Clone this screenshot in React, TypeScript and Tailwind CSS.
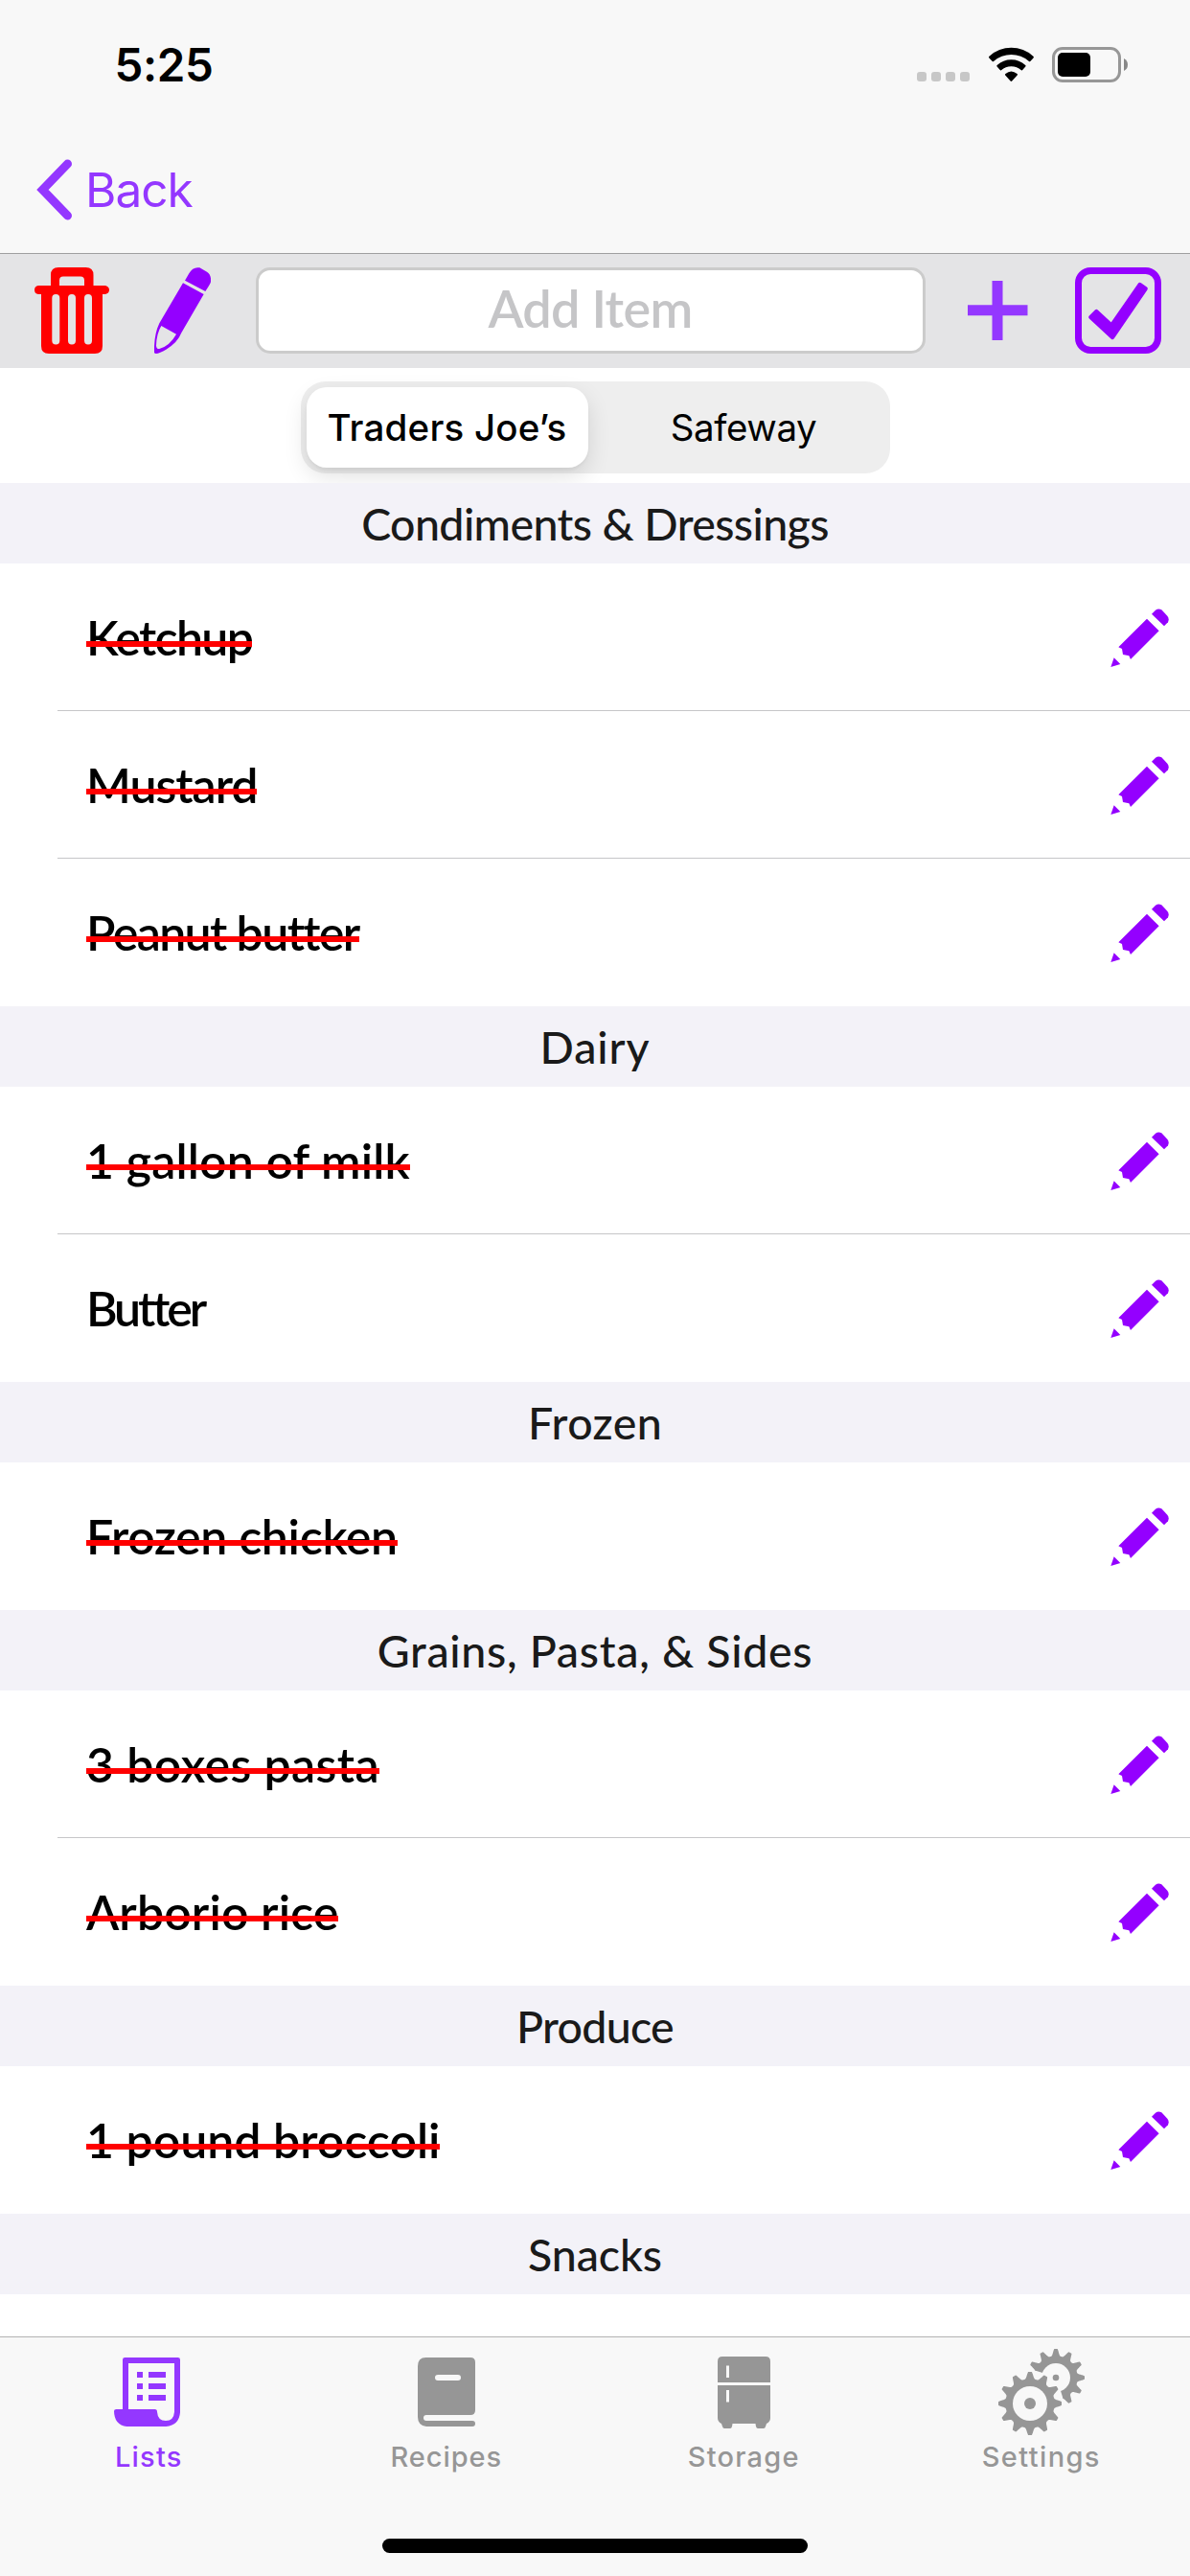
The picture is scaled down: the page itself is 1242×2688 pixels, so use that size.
import React from 'react';

type Item = { name: string; spacing: string; done: boolean };
type Section = { title: string; spacing: string; items: Item[] };

const sections: Section[] = [
  {
    title: 'Condiments & Dressings',
    spacing: 'tracking-[-0.6px]',
    items: [
      { name: 'Ketchup', spacing: 'tracking-[-1.6px]', done: true },
      { name: 'Mustard', spacing: 'tracking-[-1px]', done: true },
      { name: 'Peanut butter', spacing: 'tracking-[-1.6px]', done: true },
    ],
  },
  {
    title: 'Dairy',
    spacing: 'tracking-[0.9px]',
    items: [
      { name: '1 gallon of milk', spacing: 'tracking-[0.15px]', done: true },
      { name: 'Butter', spacing: 'tracking-[-3.1px]', done: false },
    ],
  },
  {
    title: 'Frozen',
    spacing: 'tracking-[0.4px]',
    items: [{ name: 'Frozen chicken', spacing: 'tracking-[-0.3px]', done: true }],
  },
  {
    title: 'Grains, Pasta, & Sides',
    spacing: 'tracking-[0.7px]',
    items: [
      { name: '3 boxes pasta', spacing: 'tracking-[0.4px]', done: true },
      { name: 'Arborio rice', spacing: 'tracking-[0.1px]', done: true },
    ],
  },
  {
    title: 'Produce',
    spacing: 'tracking-[-0.7px]',
    items: [{ name: '1 pound broccoli', spacing: 'tracking-[0px]', done: true }],
  },
  { title: 'Snacks', spacing: 'tracking-[-0.1px]', items: [] },
];

function StatusBar() {
  return (
    <div className="flex h-[132px] items-start justify-between pl-[119.5px] pr-[65px]">
      <span className="mt-[38px] text-[47.5px] font-semibold leading-[60px] tracking-[-0.4px] text-black">5:25</span>
      <div className="mt-[49px] flex items-start">
        <div className="mr-[64px] mt-[26px] flex gap-[5px]">
          {[0, 1, 2, 3].map((i) => (
            <span key={i} className="size-[10px] rounded-[3px] bg-[#c7c7c7]" />
          ))}
        </div>
        <svg className="-ml-[45px] mr-[18px] h-[37px] w-[49px]" viewBox="1031 49 49 37">
          <path d="M1032.4 60.4q-.9-.9.1-1.7A34 34 0 0 1 1078.400 58.700q1 .8.1 1.700L1075.300 64q-.6.6-1.300 0A28 28 0 0 0 1037 64q-.7.6-1.300 0Z" />
          <path d="M1040.600 69.600q-.8-.8.1-1.600A22 22 0 0 1 1070.200 68q.9.8.1 1.600L1067.200 73.100q-.6.6-1.300.1A16 16 0 0 0 1045 73.200q-.7.5-1.300-.1Z" />
          <path d="M1049.200 78.400q-.7-.8.2-1.400Q1055.400 72 1061.600 77q.8.600.1 1.400L1056.200 84.500q-.8.800-1.600 0Z" />
        </svg>
        <svg className="h-[37px] w-[79px]" viewBox="0 0 79 37">
          <rect x="1.500" y="1.500" width="69" height="34" rx="9.500" fill="none" stroke="#979797" strokeWidth="3" />
          <rect x="6" y="6" width="34" height="25" rx="5" />
          <path d="M75 12q4 2 4 6.500t-4 6.500Z" fill="#888" />
        </svg>
      </div>
    </div>
  );
}

function NavBar() {
  return (
    <div className="flex h-[132px] items-center pl-[38px]">
      <svg className="h-[64px] w-[38px]" viewBox="38 166.500 38 64">
        <path d="M70.500 171.500 44.500 198.500 70.500 225.500" fill="none" stroke="#9437ff" strokeWidth="9" strokeLinecap="round" />
      </svg>
      <span className="ml-[13px] text-[49.5px] leading-[60px] tracking-[-1px] text-[#9437ff]">Back</span>
    </div>
  );
}

function TrashIcon() {
  return (
    <svg className="h-[90px] w-[78px]" viewBox="0 0 78 90">
      <path
        fill="#ff0000"
        fillRule="evenodd"
        d="M17 19V8q0-8 8-8H53.500q8 0 8 8V19H74q4 1 4 4.500T74 28H71V82q0 8-8 8H15q-8 0-8-8V28H4q-4-.5-4-4.500T4 19ZM26 19H52V13.500q0-4-4-4H30q-4 0-4 4ZM18.300 32V76.500a4 4 0 0 0 8 0V32a4 4 0 0 0-8 0ZM35 32V76.500a4 4 0 0 0 8 0V32a4 4 0 0 0-8 0ZM52 32V76.500a4 4 0 0 0 8 0V32a4 4 0 0 0-8 0Z"
      />
    </svg>
  );
}

function FountainPencilIcon() {
  return (
    <svg className="h-[90px] w-[59px]" viewBox="483 837 177 270">
      <g fill="#9400ff">
        <path d="M579 878 592 856Q604 834 625 838L648 851Q662 860 660 882 659 888 643 912Z" />
        <path
          fillRule="evenodd"
          d="M573 886 638 921 568 1042Q556 1073 520 1094 500 1106 488 1107L483 1105Q481 1050 499 1012ZM505 1020Q490 1045 489 1082 490 1093 499 1092 532 1082 552 1046Z"
        />
      </g>
    </svg>
  );
}

function PlusIcon() {
  return (
    <svg className="h-[62px] w-[62.5px]" viewBox="0 0 62.500 62">
      <path d="M25.500 0h11v25.200h26v11h-26V62h-11V36.200H0v-11h25.500Z" fill="#9437ff" />
    </svg>
  );
}

function CheckBoxIcon() {
  return (
    <svg className="size-[90px]" viewBox="666 837 270 270">
      <rect x="676.500" y="847.500" width="249" height="249" rx="38" fill="none" stroke="#9400ff" strokeWidth="21" />
      <path d="M715 993 733 975 780 1019 869 891 887 904 783 1056Z" fill="#9400ff" stroke="#9400ff" strokeWidth="13" strokeLinejoin="round" />
    </svg>
  );
}

function Toolbar() {
  return (
    <div className="flex h-[120px] items-start border-t border-[#9f9fa0] bg-[#e4e4e6] pl-9 pt-[14px]">
      <TrashIcon />
      <div className="ml-[47px]">
        <FountainPencilIcon />
      </div>
      <input
        readOnly
        placeholder="Add Item"
        className="ml-[47px] h-[90px] w-[699px] rounded-[15px] border-[3px] border-[#cbcbcb] bg-white pb-[6px] pr-[1px] text-center font-[Lato] text-[54px] font-semibold tracking-[-0.7px] outline-none placeholder:text-[#c5c5c7]"
      />
      <div className="ml-[44px] mt-[14px]">
        <PlusIcon />
      </div>
      <div className="ml-[49.5px]">
        <CheckBoxIcon />
      </div>
    </div>
  );
}

function StoreTabs() {
  return (
    <div className="flex h-[120px] justify-center pt-[14px]">
      <div className="flex h-24 w-[615px] items-center rounded-[26px] bg-[#eeeeee] pl-[6px] text-[38.5px] text-black">
        <div className="flex h-[84px] w-[294px] items-center justify-center rounded-[21px] bg-white pt-[2px] font-medium tracking-[0.2px] shadow-[0_9px_24px_rgba(0,0,0,0.12),0_3px_3px_rgba(0,0,0,0.04)]">
          Traders Joe’s
        </div>
        <div className="flex flex-1 justify-center pl-[10px] pt-[2px] tracking-[-0.4px]">Safeway</div>
      </div>
    </div>
  );
}

function RowPencil() {
  return (
    <svg className="h-[62px] w-[62px]" viewBox="117 164 186 186">
      <g fill="#9400ff">
        <path d="M246 181 258 169Q267 162 277 168L295 187Q302 195 297 207L285 219Z" />
        <path d="M231 196 269 234 180 323 175 312 156 308 153 290 142 285Z" />
        <path d="M128 318 148 338 118 347Z" />
      </g>
    </svg>
  );
}

function ListRow({ item, last }: { item: Item; last: boolean }) {
  return (
    <div className="flex h-[154px] bg-white pl-[60px]">
      <div className={last ? 'flex flex-1 justify-between pl-[30px]' : 'flex flex-1 justify-between border-b border-[#c6c6c8] pl-[30px]'}>
        <div className="relative h-[154px]">
          <span className={`font-[Lato] text-[50px] font-semibold leading-[154px] text-black whitespace-nowrap ${item.spacing}`}>{item.name}</span>
          {item.done && <span className="absolute left-0 top-[81px] h-[6px] w-full bg-[#ff0000]" />}
        </div>
        <div className="mr-[21px] mt-[46.500px]">
          <RowPencil />
        </div>
      </div>
    </div>
  );
}

function ListsIcon() {
  return (
    <svg className="-ml-[3px] h-[72px] w-[69px]" viewBox="57 90 207 216">
      <g fill="#9437ff">
        <path
          fillRule="evenodd"
          d="M91 90H257Q264 90 264 97V262Q261 302 220 306H97Q58 302 57 258 57 252 64 252H84V97Q84 90 91 90ZM102 108V252H185Q192 252 192 260 194 288 219 288 244 288 246 260V108Z"
        />
        <path d="M129 135h18v18h-18ZM165 135h54v18h-54ZM129 171h18v18h-18ZM165 171h54v18h-54ZM129 207h18v18h-18ZM165 207h54v18h-54Z" />
      </g>
    </svg>
  );
}

function RecipesIcon() {
  return (
    <svg className="h-[72px] w-[60px]" viewBox="0 0 60 72">
      <path
        fill="#969696"
        fillRule="evenodd"
        d="M8.500 0H55Q60 0 60 5V55Q60 60 55 60H9Q6 60 6 63T9 66H57Q60 66 60 69T57 72H9Q0 71 0 62V9Q0 0 8.500 0ZM21 18a3 3 0 0 0 0 6H42a3 3 0 0 0 0-6Z"
      />
    </svg>
  );
}

function StorageIcon() {
  return (
    <svg className="h-[75px] w-[55px]" viewBox="0 0 55 75">
      <path
        fill="#969696"
        fillRule="evenodd"
        d="M5 0H50Q55 0 55 5V27H0V5Q0 0 5 0ZM0 30H55V64Q55 68 51 70L50 73Q49.500 75 48 75H42Q40.500 75 40 73L39.500 70H15.500L15 73Q14.500 75 13 75H7Q5.500 75 5 73L4 70Q0 68 0 64ZM9 9.500V22H12V9.500ZM9 35V47.500H12V35Z"
      />
    </svg>
  );
}

/* Twelve-toothed wheel outline sampled in polar coordinates. */
function gearPath(cx: number, cy: number, root: number, tip: number) {
  const points: string[] = [];
  for (let i = 0; i < 720; i++) {
    const a = (i * Math.PI) / 360;
    const tooth = Math.min(1, Math.pow((1 + Math.cos(12 * a)) / 2, 1.8) * 1.25);
    const r = root + (tip - root) * tooth;
    points.push(`${(cx + r * Math.cos(a)).toFixed(2)} ${(cy + r * Math.sin(a)).toFixed(2)}`);
  }
  return `M${points.join('L')}Z`;
}

function SettingsIcon() {
  return (
    <svg className="h-[90px] w-[90px]" viewBox="66 63 270 270">
      <path d={gearPath(246, 153, 68, 90)} fill="#969696" />
      <circle cx="246" cy="153" r="45" fill="#f8f8f8" />
      <circle cx="165" cy="234" r="104" fill="#f8f8f8" />
      <circle cx="246" cy="153" r="10" fill="#969696" />
      <path d={gearPath(165, 234, 77, 99)} fill="#969696" />
      <circle cx="165" cy="234" r="54" fill="#f8f8f8" />
      <circle cx="165" cy="234" r="18" fill="#969696" />
    </svg>
  );
}

const tabs = [
  { label: 'Lists', icon: <ListsIcon />, style: 'text-[#9437ff] tracking-[1.2px]' },
  { label: 'Recipes', icon: <RecipesIcon />, style: 'text-[#969696] tracking-[0.9px]' },
  { label: 'Storage', icon: <StorageIcon />, style: 'text-[#969696] tracking-[1.2px]' },
  { label: 'Settings', icon: <SettingsIcon />, style: 'text-[#969696] tracking-[1.4px]' },
];

function TabBar() {
  return (
    <div className="flex h-[250px] flex-col items-center border-t border-[#b2b2b2] bg-[#f8f8f8]">
      <div className="grid w-full grid-cols-4 pt-[7px]">
        {tabs.map((tab) => (
          <div key={tab.label} className="flex flex-col items-center">
            <div className="flex h-[100px] items-center">{tab.icon}</div>
            <span className={`text-[29px] font-medium leading-[35px] ${tab.style}`}>{tab.label}</span>
          </div>
        ))}
      </div>
      <div className="mt-[68px] h-[15px] w-[444px] rounded-full bg-black" />
    </div>
  );
}

export default function App() {
  return (
    <div className="flex h-[2688px] w-[1242px] flex-col overflow-hidden bg-white font-[Inter]">
      <header className="bg-[#f8f8f8]">
        <StatusBar />
        <NavBar />
      </header>
      <Toolbar />
      <StoreTabs />
      <main className="flex-1 overflow-hidden">
        {sections.map((section) => (
          <section key={section.title}>
            <h2 className={`h-[84px] bg-[#f3f2f8] text-center font-[Lato] text-[46.5px] font-medium leading-[84px] text-[#1a1a1a] ${section.spacing}`}>
              {section.title}
            </h2>
            {section.items.map((item, i) => (
              <ListRow key={item.name} item={item} last={i === section.items.length - 1} />
            ))}
          </section>
        ))}
      </main>
      <TabBar />
    </div>
  );
}
